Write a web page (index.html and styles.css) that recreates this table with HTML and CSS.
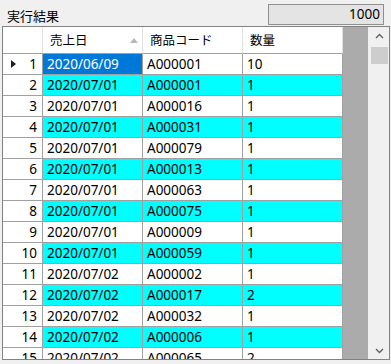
FILE: index.html
```html
<!DOCTYPE html>
<html lang="ja">
<head>
<meta charset="utf-8">
<link rel="stylesheet" href="styles.css">
</head>
<body>
<div class="topbar">
  <span class="title">実行結果</span>
  <div class="countbox">1000</div>
</div>
<div class="grid">
  <div class="table-area">
    <div class="table">
      <div class="row head">
        <div class="cell rh"></div>
        <div class="cell col hc">売上日<span class="sort"></span></div>
        <div class="cell col hc">商品コード</div>
        <div class="cell col hc">数量</div>
      </div>
      <div class="row"><div class="cell rh"><span class="cur"></span>1</div><div class="cell col sel">2020/06/09</div><div class="cell col">A000001</div><div class="cell col">10</div></div>
      <div class="row alt"><div class="cell rh">2</div><div class="cell col">2020/07/01</div><div class="cell col">A000001</div><div class="cell col">1</div></div>
      <div class="row"><div class="cell rh">3</div><div class="cell col">2020/07/01</div><div class="cell col">A000016</div><div class="cell col">1</div></div>
      <div class="row alt"><div class="cell rh">4</div><div class="cell col">2020/07/01</div><div class="cell col">A000031</div><div class="cell col">1</div></div>
      <div class="row"><div class="cell rh">5</div><div class="cell col">2020/07/01</div><div class="cell col">A000079</div><div class="cell col">1</div></div>
      <div class="row alt"><div class="cell rh">6</div><div class="cell col">2020/07/01</div><div class="cell col">A000013</div><div class="cell col">1</div></div>
      <div class="row"><div class="cell rh">7</div><div class="cell col">2020/07/01</div><div class="cell col">A000063</div><div class="cell col">1</div></div>
      <div class="row alt"><div class="cell rh">8</div><div class="cell col">2020/07/01</div><div class="cell col">A000075</div><div class="cell col">1</div></div>
      <div class="row"><div class="cell rh">9</div><div class="cell col">2020/07/01</div><div class="cell col">A000009</div><div class="cell col">1</div></div>
      <div class="row alt"><div class="cell rh">10</div><div class="cell col">2020/07/01</div><div class="cell col">A000059</div><div class="cell col">1</div></div>
      <div class="row"><div class="cell rh">11</div><div class="cell col">2020/07/02</div><div class="cell col">A000002</div><div class="cell col">1</div></div>
      <div class="row alt"><div class="cell rh">12</div><div class="cell col">2020/07/02</div><div class="cell col">A000017</div><div class="cell col">2</div></div>
      <div class="row"><div class="cell rh">13</div><div class="cell col">2020/07/02</div><div class="cell col">A000032</div><div class="cell col">1</div></div>
      <div class="row alt"><div class="cell rh">14</div><div class="cell col">2020/07/02</div><div class="cell col">A000006</div><div class="cell col">1</div></div>
      <div class="row"><div class="cell rh">15</div><div class="cell col">2020/07/02</div><div class="cell col">A000065</div><div class="cell col">2</div></div>
    </div>
  </div>
  <div class="vscroll">
    <div class="arrow up"><svg width="9" height="6" viewBox="0 0 9 6"><path d="M1 5 L4.5 1.5 L8 5" fill="none" stroke="#606060" stroke-width="1.4"/></svg></div>
    <div class="thumb"></div>
    <div class="track"></div>
    <div class="arrow down"><svg width="9" height="6" viewBox="0 0 9 6"><path d="M1 1 L4.5 4.5 L8 1" fill="none" stroke="#606060" stroke-width="1.4"/></svg></div>
  </div>
</div>
</body>
</html>
```
FILE: styles.css
```css
html, body {
  margin: 0;
  padding: 0;
}
body {
  background: #f0f0f0;
  width: 391px;
  height: 364px;
  overflow: hidden;
  font-family: "Noto Sans", "Noto Sans CJK JP", sans-serif;
  font-size: 13.5px;
  color: #000;
}
.topbar {
  height: 26px;
  display: flex;
  align-items: flex-start;
  justify-content: space-between;
  padding: 0 7px 0 7px;
  box-sizing: border-box;
}
.title {
  margin-top: 7px;
  line-height: 17px;
  font-family: "Noto Sans CJK JP", sans-serif;
  font-size: 13px;
}
.countbox {
  margin-top: 4px;
  width: 116px;
  height: 21px;
  box-sizing: border-box;
  border: 1px solid #8f8f8f;
  background: #e4e4e4;
  text-align: right;
  padding-right: 3px;
  line-height: 19px;
  font-size: 13.5px;
}
.grid {
  margin-left: 2px;
  width: 388px;
  height: 334px;
  box-sizing: border-box;
  border: 1px solid #828282;
  display: flex;
  overflow: hidden;
}
.table-area {
  flex: 1;
  background: #ababab;
  overflow: hidden;
}
.table {
  width: 340px;
}
.row {
  display: flex;
  height: 21px;
  background: #fff;
}
.row.head {
  height: 27px;
}
.cell {
  box-sizing: border-box;
  border-right: 1px solid #a0a0a0;
  border-bottom: 1px solid #a0a0a0;
  white-space: nowrap;
  line-height: 20px;
  position: relative;
}
.row.head .cell {
  line-height: 26px;
  font-family: "Noto Sans CJK JP", sans-serif;
  font-size: 12.5px;
  border-right-color: #e0e0e0;
  border-bottom-color: #a0a0a0;
}
.rh {
  width: 40px;
  text-align: right;
  padding-right: 5px;
  background: #fff;
}
.col {
  width: 100px;
  padding-left: 4px;
}
.hc {
  padding-left: 7px;
}
.row.alt .col {
  background: #00ffff;
}
.col.sel {
  background: #0078d7;
  color: #fff;
}
.cur {
  position: absolute;
  left: 8px;
  top: 6px;
  width: 0;
  height: 0;
  border-top: 4.5px solid transparent;
  border-bottom: 4.5px solid transparent;
  border-left: 5px solid #1e1e1e;
}
.sort {
  position: absolute;
  left: 87px;
  top: 11px;
  width: 0;
  height: 0;
  border-left: 4.5px solid transparent;
  border-right: 4.5px solid transparent;
  border-bottom: 5px solid #b8b8b8;
}
.vscroll {
  width: 19px;
  margin-left: 2px;
  background: #f0f0f0;
  display: flex;
  flex-direction: column;
}
.arrow {
  height: 17px;
  display: flex;
  align-items: center;
  justify-content: center;
}
.thumb {
  margin: 3px 1px 0 1px;
  height: 17px;
  background: #cdcdcd;
}
.track {
  flex: 1;
}
```
